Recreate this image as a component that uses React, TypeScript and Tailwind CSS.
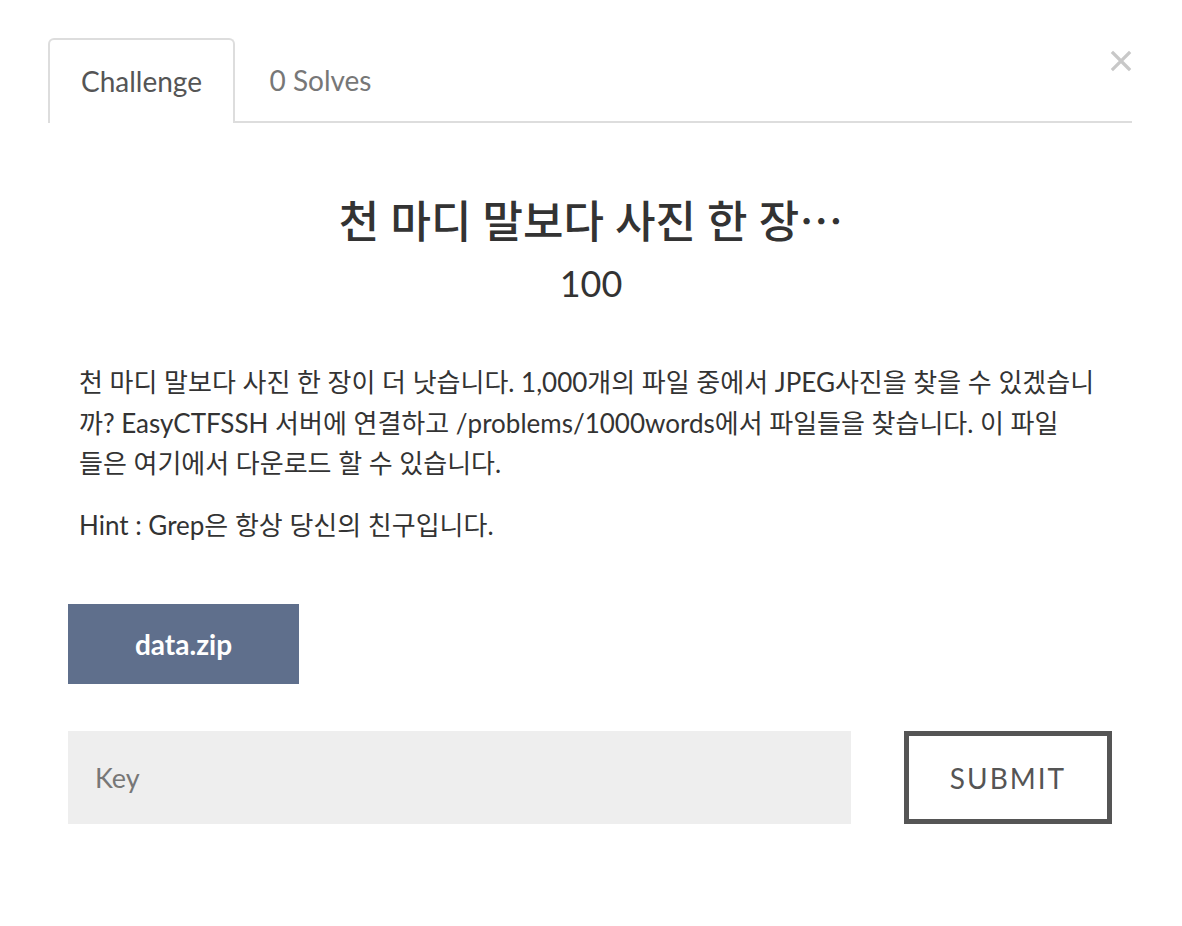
import React from "react";

const font = { fontFamily: 'Lato, "Noto Sans CJK KR", sans-serif' };

export default function App() {
  return (
    <div className="relative min-h-[926px] w-[1182px] bg-white text-[#333]" style={font}>
      <button className="absolute left-[1106px] top-[46px] flex h-[30px] w-[30px] items-center justify-center text-[#c8c8c8]">
        <svg width="22" height="22" viewBox="0 0 22 22">
          <path d="M3 3 L19 19 M19 3 L3 19" stroke="currentColor" strokeWidth="3.2" strokeLinecap="square" />
        </svg>
      </button>

      <div className="px-[48px] pt-[38px]">
        <div className="flex w-[1084px] border-b-2 border-[#dddddd]">
          <div className="-mb-[2px] flex h-[85px] w-[187px] items-center justify-center rounded-t-[6px] border-2 border-b-0 border-[#dddddd] bg-white pb-[2px] text-[28px] text-[#555]">
            Challenge
          </div>
          <div className="flex h-[83px] w-[171px] items-center justify-center text-[28px] text-[#777]">
            0 Solves
          </div>
        </div>
      </div>

      <div className="flex flex-col items-center pt-[68px]">
        <h1 className="text-[44px] font-medium leading-[56px] text-[#333]">
          천 마디 말보다 사진 한 장<span style={{ fontFamily: '"Noto Sans CJK JP", sans-serif' }}>…</span>
        </h1>
        <h2 className="mt-[11px] text-[36px] leading-[46px] text-[#333]">100</h2>
      </div>

      <div className="pl-[79px] pr-[60px] pt-[56px] text-[26px] leading-[40.5px] text-[#333]">
        <p>
          천 마디 말보다 사진 한 장이 더 낫습니다. 1,000개의 파일 중에서 JPEG사진을 찾을 수 있겠습니
          <br />
          까? EasyCTFSSH 서버에 연결하고 /problems/1000words에서 파일들을 찾습니다. 이 파일
          <br />
          들은 여기에서 다운로드 할 수 있습니다.
        </p>
        <p className="mt-[21px]">Hint : Grep은 항상 당신의 친구입니다.</p>
      </div>

      <div className="pl-[68px] pt-[59px]">
        <button className="flex h-[80px] w-[231px] items-center justify-center bg-[#5f6f8c] text-[28px] font-bold text-white">
          data.zip
        </button>
      </div>

      <div className="flex items-center pl-[68px] pr-[70px] pt-[47px]">
        <input
          placeholder="Key"
          className="h-[93px] w-[783px] bg-[#eeeeee] px-[27px] text-[27px] text-[#555] outline-none placeholder:text-[#777]"
          style={font}
        />
        <button className="ml-auto flex h-[93px] w-[208px] items-center justify-center border-[5px] border-[#555] bg-white text-[28px] tracking-[2px] text-[#555]">
          SUBMIT
        </button>
      </div>
    </div>
  );
}
